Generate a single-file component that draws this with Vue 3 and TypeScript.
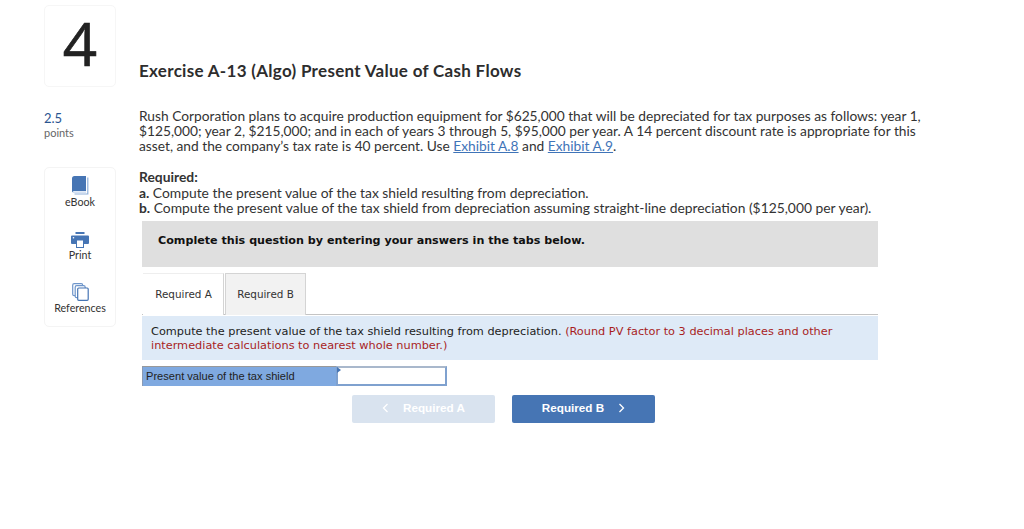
<script setup lang="ts">
const tools = [
  { id: 'book', label: 'eBook' },
  { id: 'print', label: 'Print' },
  { id: 'refs', label: 'References' },
]
</script>

<template>
  <div class="page">
    <header class="head">
      <div class="num-card">4</div>
      <h1>Exercise A-13 (Algo) Present Value of Cash Flows</h1>
    </header>

    <div class="body">
      <aside class="side">
        <div class="score">2.5</div>
        <div class="points">points</div>
        <div class="tools">
          <div v-for="t in tools" :key="t.id" class="tool" :class="t.id">
            <svg v-if="t.id === 'book'" width="17" height="19" viewBox="0 0 17 19">
              <path d="M0 2.500A2.500 2.500 0 0 1 2.500 0H14v15H2.500A2.500 2.500 0 0 0 0 16.500z" fill="#4675b4" />
              <path d="M15.800 1.500V18H2.500" fill="none" stroke="#8fb0da" stroke-width="1.200" />
              <path d="M.5 17a2 2 0 0 1 2-1.500H14v1.200H3z" fill="#c7d8ee" />
            </svg>
            <svg v-else-if="t.id === 'print'" width="18" height="16" viewBox="0 0 18 16">
              <rect x="4.500" y="0" width="9" height="2" fill="#4675b4" />
              <path d="M1 3.500h16a1 1 0 0 1 1 1V11a1 1 0 0 1-1 1H1a1 1 0 0 1-1-1V4.500a1 1 0 0 1 1-1z" fill="#4675b4" />
              <rect x="5.500" y="8" width="7" height="7.500" fill="#fff" stroke="#4675b4" />
              <circle cx="2.500" cy="5.800" r=".8" fill="#fff" />
            </svg>
            <svg v-else width="17" height="18" viewBox="0 0 17 18">
              <rect x=".7" y=".7" width="10" height="12" rx="1.500" fill="#fff" stroke="#6f96cb" stroke-width="1.200" />
              <rect x="3.200" y="2.700" width="10" height="12" rx="1.500" fill="#fff" stroke="#6f96cb" stroke-width="1.200" />
              <rect x="5.700" y="5" width="10.500" height="12.300" rx="1" fill="#fff" stroke="#4675b4" stroke-width="1.200" />
            </svg>
            <span>{{ t.label }}</span>
          </div>
        </div>
      </aside>

      <main class="main">
        <p class="intro">
          Rush Corporation plans to acquire production equipment for $625,000 that will be depreciated for tax purposes as follows: year 1, $125,000; year 2, $215,000; and in each of years 3 through 5, $95,000 per year. A 14 percent discount rate is appropriate for this asset, and the company’s tax rate is 40 percent. Use <a>Exhibit A.8</a> and <a>Exhibit A.9</a>.
        </p>
        <div class="required">
          <strong>Required:</strong><br />
          <strong>a.</strong> Compute the present value of the tax shield resulting from depreciation.<br />
          <strong>b.</strong> Compute the present value of the tax shield from depreciation assuming straight-line depreciation ($125,000 per year).
        </div>

        <div class="banner">Complete this question by entering your answers in the tabs below.</div>

        <div class="tabs">
          <div class="tab active">Required A</div>
          <div class="tab">Required B</div>
        </div>

        <div class="prompt">
          Compute the present value of the tax shield resulting from depreciation.
          <span class="note">(Round PV factor to 3 decimal places and other intermediate calculations to nearest whole number.)</span>
        </div>

        <div class="answer">
          <div class="answer-label">Present value of the tax shield</div>
          <div class="answer-cell"><i class="marker"></i></div>
        </div>

        <div class="nav">
          <button class="btn off" type="button">
            <svg width="7" height="10" viewBox="0 0 7 10"><path d="M5.500 1 1.500 5l4 4" fill="none" stroke="#fff" stroke-width="1.300" /></svg>
            Required A
          </button>
          <button class="btn on" type="button">
            Required B
            <svg width="7" height="10" viewBox="0 0 7 10"><path d="M1.500 1l4 4-4 4" fill="none" stroke="#fff" stroke-width="1.300" /></svg>
          </button>
        </div>
      </main>
    </div>
  </div>
</template>

<style scoped>
.page {
  width: 1024px;
  height: 529px;
  box-sizing: border-box;
  padding: 5px 0 0 44px;
  overflow: hidden;
  font-family: Lato, "Liberation Sans", sans-serif;
  color: #333;
}
.head {
  display: flex;
  gap: 23px;
  align-items: flex-end;
}
.num-card {
  width: 72px;
  height: 82px;
  box-sizing: border-box;
  border: 1px solid #f6f6f6;
  border-radius: 5px;
  display: flex;
  align-items: center;
  justify-content: center;
  font-family: "Open Sans", sans-serif;
  font-weight: 500;
  font-size: 60px;
  color: #222;
  line-height: 1;
  padding-bottom: 6px;
  -webkit-text-stroke: 0.7px #222;
}
h1 {
  margin: 0 0 6px;
  font-size: 17px;
  letter-spacing: 0.3px;
  line-height: 20px;
  font-weight: 700;
  color: #2d2d2d;
}
.body {
  display: flex;
  gap: 23px;
  margin-top: 20px;
}
.side {
  width: 72px;
  flex: none;
}
.score {
  font-size: 13px;
  line-height: 16px;
  color: #2a5590;
  margin-top: 3px;
}
.points {
  font-size: 11px;
  line-height: 14px;
  color: #666;
}
.tools {
  margin-top: 27px;
  height: 160px;
  box-sizing: border-box;
  border: 1px solid #f4f4f4;
  border-radius: 5px;
  padding-top: 8px;
  display: flex;
  flex-direction: column;
  align-items: center;
}
.tool {
  display: flex;
  flex-direction: column;
  align-items: center;
  font-size: 10.700px;
  line-height: 14px;
  color: #333;
  white-space: nowrap;
}
.tool svg {
  display: block;
}
.tool.print {
  margin-top: 23px;
}
.tool.refs {
  margin-top: 21px;
}
.main {
  width: 790px;
  flex: none;
}
.intro {
  margin: 1px 0 0;
  font-size: 13.750px;
  line-height: 15px;
}
.intro a {
  color: #3f74b8;
  text-decoration: underline;
}
.required {
  margin-top: 16px;
  font-size: 13.850px;
  line-height: 15.500px;
}
.banner {
  margin: 5px 0 0 3px;
  width: 736px;
  height: 46px;
  box-sizing: border-box;
  background: #dfdfdf;
  padding: 12px 16px;
  font-family: "DejaVu Sans", sans-serif;
  font-size: 11.150px;
  font-weight: 700;
  line-height: 15px;
  color: #111;
}
.tabs {
  display: flex;
  margin: 6px 0 0 3px;
  width: 736px;
  height: 42px;
  box-sizing: border-box;
  border-bottom: 1px solid #c4c4c4;
}
.tab {
  width: 81px;
  height: 42px;
  box-sizing: border-box;
  border: 1px solid #d4d4d4;
  border-bottom: 0;
  background: #f2f2f2;
  font-family: "DejaVu Sans", sans-serif;
  font-size: 10.400px;
  display: flex;
  align-items: center;
  justify-content: center;
  color: #333;
}
.tab.active {
  background: #fff;
  border-left: 0;
  margin: 0 1px 0 1px;
  padding-left: 1px;
  border-top-color: #eee;
}
.prompt {
  margin: 1px 0 0 3px;
  width: 736px;
  height: 44px;
  box-sizing: border-box;
  background: #deeaf7;
  padding: 9px 9px;
  font-family: "DejaVu Sans", sans-serif;
  font-size: 11.300px;
  line-height: 14px;
  color: #222;
}
.note {
  color: #a81e1e;
}
.answer {
  display: flex;
  margin: 6px 0 0 3px;
  width: 305px;
  height: 20px;
  font-family: "Liberation Sans", sans-serif;
  font-size: 11.100px;
  color: #222;
}
.answer-label {
  width: 194px;
  flex: none;
  background: #7fa9e0;
  border-top: 1px solid #999;
  border-left: 1px solid #8a9bb5;
  box-sizing: border-box;
  line-height: 18px;
  padding-left: 3px;
}
.answer-cell {
  flex: 1;
  box-sizing: border-box;
  border: 2px solid #7fa1cf;
  border-top-color: #a9b8cc;
  position: relative;
  background: #fff;
}
.marker {
  position: absolute;
  left: -1px;
  top: -1px;
  width: 0;
  height: 0;
  border-top: 3px solid transparent;
  border-bottom: 3px solid transparent;
  border-left: 4px solid #4675b4;
}
.nav {
  display: flex;
  gap: 17px;
  margin: 9px 0 0 213px;
}
.btn {
  width: 143px;
  height: 28px;
  border: 0;
  border-radius: 2px;
  color: #fff;
  font-family: "Liberation Sans", sans-serif;
  font-size: 11.700px;
  font-weight: 700;
  display: flex;
  align-items: center;
  justify-content: center;
  gap: 14px;
  padding: 0 0 2px;
}
.btn.off {
  background: #d9e3ef;
}
.btn.on {
  background: #4675b4;
}
</style>
